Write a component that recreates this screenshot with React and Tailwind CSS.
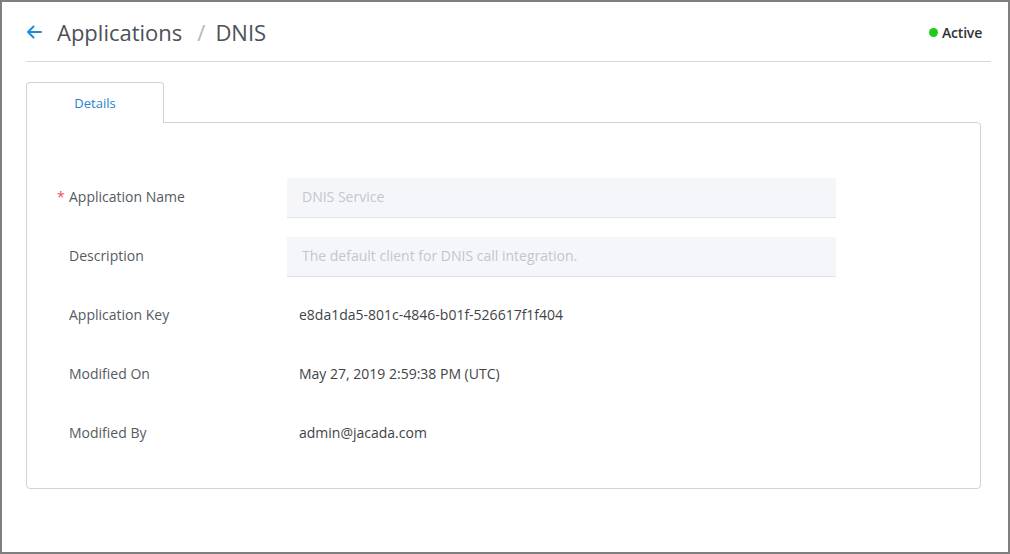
import React from "react";

const font = { fontFamily: '"Open Sans", "Noto Sans", sans-serif' };

function Row({ label, required, children }) {
  return (
    <div className="flex items-center h-[40px]">
      <div className="relative w-[218px] pb-[3px] text-[14px] text-[#555b61]">
        {required && (
          <span className="absolute left-[-12px] top-[0px] text-[#f0504f]">*</span>
        )}
        {label}
      </div>
      {children}
    </div>
  );
}

function Input({ value }) {
  return (
    <div className="w-[549px] h-[40px] bg-[#f5f6fa] border-b border-[#e2e3ea] flex items-center px-[15px] pb-[2px] text-[14px] text-[#c3c6cd]">
      {value}
    </div>
  );
}

function Value({ children }) {
  return <div className="pl-[12px] pb-[3px] text-[14px] text-[#3f4347]">{children}</div>;
}

export default function App() {
  return (
    <div
      className="w-[1010px] h-[554px] border-2 border-[#7f7f7f] bg-white box-border pl-[24px] pr-[17px] overflow-hidden"
      style={font}
    >
      <div className="flex items-center justify-between pt-[14px] pb-[13px] border-b border-[#d9d9d9]">
        <div className="flex items-center h-[32px]">
          <svg width="16" height="14" viewBox="0 0 16 14" className="mr-[15px]">
            <path d="M15 7H2M7.5 1.5L2 7l5.5 5.5" fill="none" stroke="#1a8cd8" strokeWidth="2" strokeLinecap="round" strokeLinejoin="round" />
          </svg>
          <span className="text-[22px] leading-[32px] text-[#4d5156]">Applications</span>
          <span className="text-[22px] leading-[32px] text-[#b5b8bd] ml-[15px] mr-[10px]">/</span>
          <span className="text-[22px] leading-[32px] text-[#4d5156]">DNIS</span>
        </div>
        <div className="flex items-center gap-[4px] pr-[9px] text-[14px] font-semibold tracking-[-0.2px] text-[#2f3338]">
          <span className="w-[9px] h-[9px] rounded-full bg-[#1ecb1e]"></span>
          Active
        </div>
      </div>

      <div className="mt-[20px] mr-[10px]">
        <div className="relative z-10 w-[138px] h-[41px] -mb-[1px] border border-b-0 border-[#d3d3d3] rounded-t-[4px] bg-white flex items-center justify-center pt-[1px] text-[13px] text-[#1f82d2]">
          Details
        </div>
        <div className="border border-[#d3d3d3] rounded-b-[4px] rounded-tr-[4px] pt-[55px] pb-[34px] pl-[42px] flex flex-col gap-[19px]">
          <Row label="Application Name" required>
            <Input value="DNIS Service" />
          </Row>
          <Row label="Description">
            <Input value="The default client for DNIS call integration." />
          </Row>
          <Row label="Application Key">
            <Value>e8da1da5-801c-4846-b01f-526617f1f404</Value>
          </Row>
          <Row label="Modified On">
            <Value>May 27, 2019 2:59:38 PM (UTC)</Value>
          </Row>
          <Row label="Modified By">
            <Value>admin@jacada.com</Value>
          </Row>
        </div>
      </div>
    </div>
  );
}
